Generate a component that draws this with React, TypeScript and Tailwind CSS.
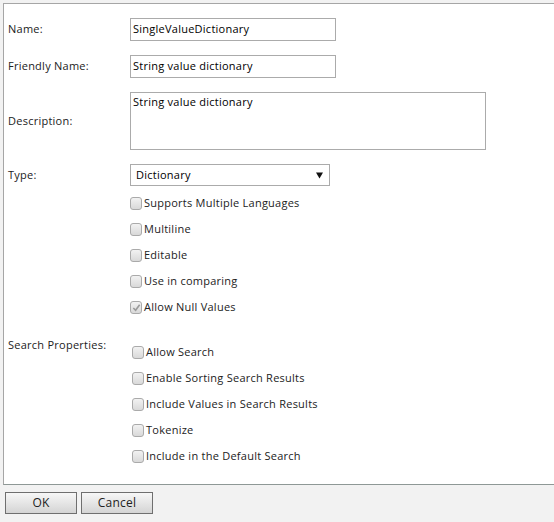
import React from 'react'

const FONT = { fontFamily: '"Open Sans", "DejaVu Sans", sans-serif' }

function Field({ label, children, top = false }: { label: string; children: React.ReactNode; top?: boolean }) {
  return (
    <div className={`flex mt-[14px] ${top ? 'items-start' : 'items-center'}`}>
      <div className="w-[122px] shrink-0 text-[11px] text-[#222]">{label}</div>
      {children}
    </div>
  )
}

function Check({ label, checked, disabled }: { label: string; checked?: boolean; disabled?: boolean }) {
  return (
    <div className="h-[26px] flex items-center">
      <span className="w-[12px] h-[13px] rounded-[3px] border border-[#aaaaaa] bg-linear-to-b from-[#f2f2f2] to-[#d9d9d9] flex items-center justify-center mr-[2px]">
        {checked && (
          <svg width="9" height="9" viewBox="0 0 10 10">
            <path d="M1.5 5.5 L4 8 L8.5 2" stroke={disabled ? '#9a9a9a' : '#333'} strokeWidth="1.8" fill="none" />
          </svg>
        )}
      </span>
      <span className="text-[11px] text-[#222]">{label}</span>
    </div>
  )
}

export default function App() {
  const general = [
    { label: 'Supports Multiple Languages' },
    { label: 'Multiline' },
    { label: 'Editable' },
    { label: 'Use in comparing' },
    { label: 'Allow Null Values', checked: true, disabled: true },
  ]
  const search = ['Allow Search', 'Enable Sorting Search Results', 'Include Values in Search Results', 'Tokenize', 'Include in the Default Search']

  return (
    <div className="w-[554px] h-[522px] bg-[#f2f2f2] overflow-hidden tracking-[0.25px]" style={FONT}>
      <div className="mt-[3px] ml-[3px] h-[482px] bg-white border-t border-l border-b border-t-[#a6a6a6] border-l-[#a6a6a6] border-b-[#8e9896] pl-[4px]">
        <Field label="Name:">
          <div className="w-[206px] h-[23px] border border-[#ababab] px-[2px] flex items-center text-[11px] text-black">
            SingleValueDictionary
          </div>
        </Field>
        <Field label="Friendly Name:">
          <div className="w-[206px] h-[23px] border border-[#ababab] px-[2px] flex items-center text-[11px] text-black">
            String value dictionary
          </div>
        </Field>
        <Field label="Description:">
          <div className="w-[356px] h-[58px] border border-[#ababab] px-[2px] pt-[2px] text-[11px] text-black leading-[14px]">
            String value dictionary
          </div>
        </Field>
        <Field label="Type:">
          <div className="w-[200px] h-[22px] border border-[#ababab] pl-[5px] pr-[6px] flex items-center justify-between text-[11px] text-black">
            <span>Dictionary</span>
            <svg width="7" height="7" viewBox="0 0 7 7">
              <path d="M0 0.5 H7 L3.5 6.5 Z" fill="#111" />
            </svg>
          </div>
        </Field>

        <div className="mt-[4px] ml-[122px]">
          {general.map(c => (
            <Check key={c.label} label={c.label} checked={c.checked} disabled={c.disabled} />
          ))}
        </div>

        <div className="flex mt-[19px]">
          <div className="w-[124px] shrink-0 text-[11px] text-[#222] leading-[14px] -mt-[1px]">Search Properties:</div>
          <div>
            {search.map(s => <Check key={s} label={s} />)}
          </div>
        </div>
      </div>

      <div className="flex gap-[4px] ml-[5px] mt-[7px]">
        {['OK', 'Cancel'].map(b => (
          <button
            key={b}
            className="w-[72px] h-[22px] border border-[#6f6f6f] bg-linear-to-b from-[#f7f7f7] to-[#d4d4d4] text-[12px] text-[#222] flex items-center justify-center"
          >
            {b}
          </button>
        ))}
      </div>
    </div>
  )
}
